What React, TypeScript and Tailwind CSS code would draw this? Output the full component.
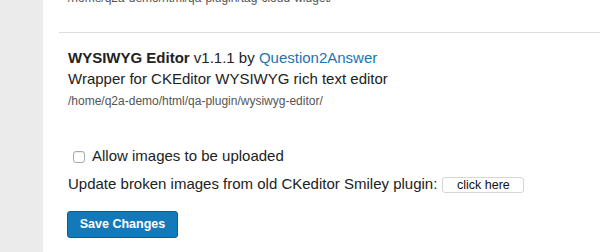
import React from "react";

export default function App() {
  return (
    <div
      className="flex h-[252px] w-[600px] overflow-hidden bg-white text-[#333]"
      style={{ fontFamily: '"Liberation Sans", Arial, Helvetica, sans-serif' }}
    >
      <div className="w-[43px] shrink-0 bg-[#ebebeb]" />
      <div className="flex-1 pl-[16px]">
        <div className="-mt-[9px] pl-[9px] text-[12px] leading-[15px] text-[#555]">
          /home/q2a-demo/html/qa-plugin/tag-cloud-widget/
        </div>
        <div className="mt-[26px] h-px bg-[#dcdcdc]" />
        <div className="pl-[9px] pt-[15px]">
          <div className="text-[15px] leading-[20px] text-[#222]">
            <span className="font-bold">WYSIWYG Editor</span> v1.1.1 by{" "}
            <span className="text-[#1b74b4]">Question2Answer</span>
          </div>
          <div className="mt-[1px] text-[15px] leading-[20px] text-[#222]">
            Wrapper for CKEditor WYSIWYG rich text editor
          </div>
          <div className="mt-[5px] text-[12px] leading-[15px] text-[#555]">
            /home/q2a-demo/html/qa-plugin/wysiwyg-editor/
          </div>
          <div className="mt-[37px] flex h-[20px] items-center pl-[5px] text-[15px] leading-[20px] text-[#222]">
            <span className="mr-[7px] mt-[2px] inline-block h-[12px] w-[12px] rounded-[3px] border border-[#a9a9a9] bg-white shadow-[inset_0_1px_1px_rgba(0,0,0,0.08)]" />
            Allow images to be uploaded
          </div>
          <div className="mt-[8px] flex h-[20px] items-center text-[15px] leading-[20px] text-[#222]">
            <span>Update broken images from old CKeditor Smiley plugin:</span>
            <span className="ml-[5px] mt-[2px] flex h-[16px] w-[82px] items-center justify-center rounded-[3px] border border-[#d6d6d6] bg-white text-[12.5px] text-[#111]">
              click here
            </span>
          </div>
          <div className="mt-[17px] flex">
            <span className="ml-[-1px] flex h-[27px] w-[111px] items-center justify-center rounded-[3px] border border-[#0d5d91] bg-[#1379b9] text-[12.5px] font-bold text-white">
              Save Changes
            </span>
          </div>
        </div>
      </div>
    </div>
  );
}
